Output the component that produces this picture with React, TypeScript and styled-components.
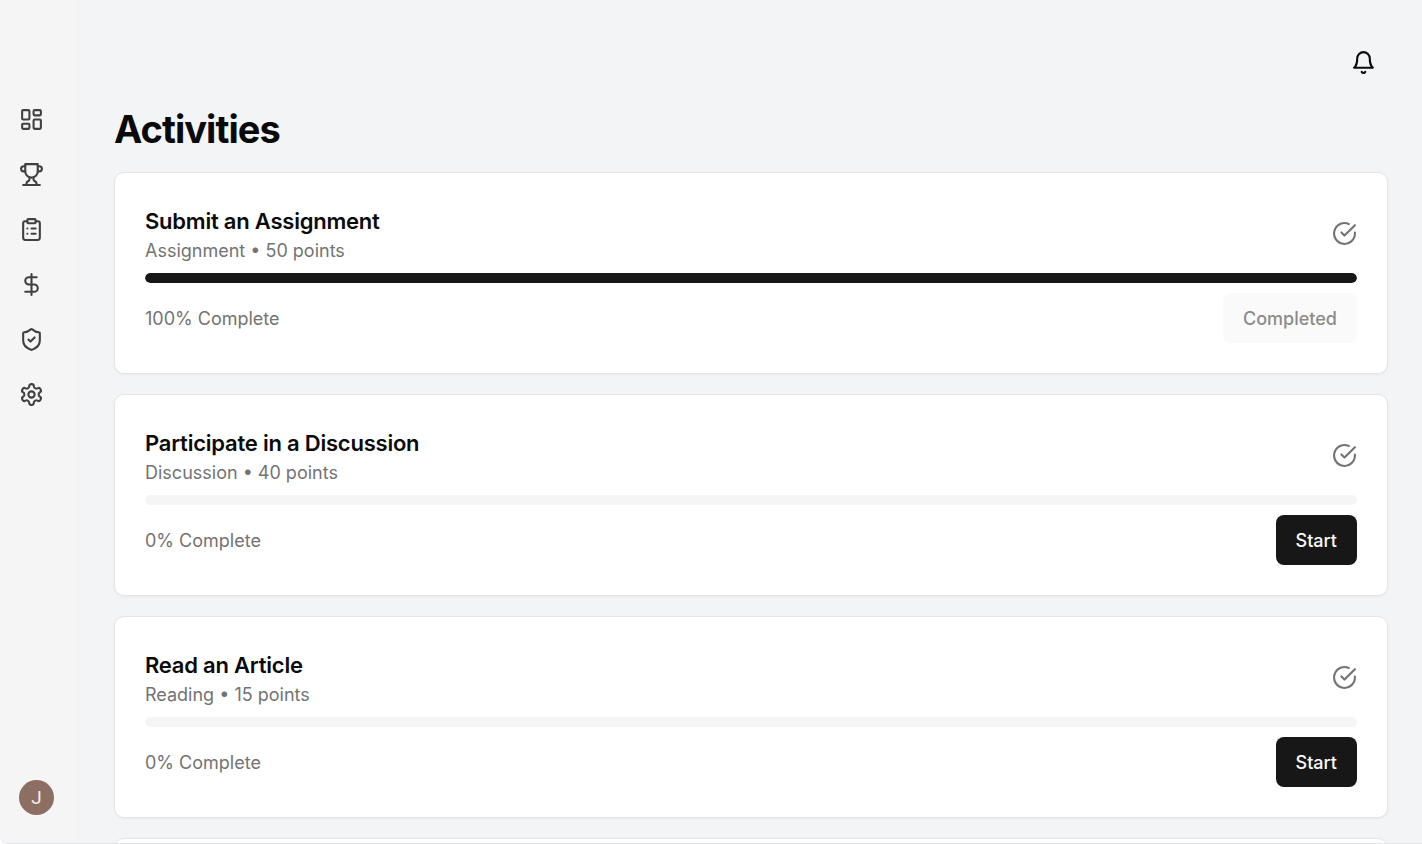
import React from "react";
import styled, { createGlobalStyle } from "styled-components";
import { ClipboardList, DollarSign, LayoutDashboard, ShieldCheck } from "lucide-react";

const GlobalStyle = createGlobalStyle`
  *, *::before, *::after { box-sizing: border-box; }
  body {
    margin: 0;
    background: #fff;
    color: #0a0a0a;
    font-family: Inter, "Liberation Sans", sans-serif;
    font-size: 18px;
    line-height: 25px;
  }
  h1, h2, p, ul { margin: 0; padding: 0; }
`;

const Shell = styled.div`
  display: flex;
  height: 100vh;
  overflow: hidden;
  background: #f3f4f6;
  border-bottom: 1px solid #e2e4e8;
  border-radius: 0 0 0 8px;
`;

const Sidebar = styled.aside`
  display: flex;
  flex-direction: column;
  justify-content: space-between;
  flex: none;
  width: 75px;
  padding: 92px 19px 28px;
  background: #f5f5f5;
`;

const NavList = styled.ul`
  display: flex;
  flex-direction: column;
  list-style: none;
`;

const NavLink = styled.a`
  display: flex;
  align-items: center;
  height: 55px;
  color: #404040;
`;

const Avatar = styled.button`
  width: 35px;
  height: 35px;
  padding: 0;
  border: 0;
  border-radius: 50%;
  background: #8d6e63;
  color: #f5efec;
  font: 400 19px/35px Roboto, sans-serif;
`;

const Main = styled.main`
  flex: 1;
  min-width: 0;
  padding: 37px 34px 20px 39px;
  overflow-y: auto;
  scrollbar-width: none;
`;

const TopBar = styled.header`
  display: flex;
  justify-content: flex-end;
`;

const IconButton = styled.button`
  display: flex;
  align-items: center;
  justify-content: center;
  width: 50px;
  height: 50px;
  padding: 0;
  border: 0;
  background: none;
  color: #0a0a0a;
`;

const PageTitle = styled.h1`
  margin: 20px 0;
  font-size: 38px;
  font-weight: 700;
  line-height: 45px;
  letter-spacing: -0.025em;
`;

const CardList = styled.div`
  display: flex;
  flex-direction: column;
  gap: 20px;
`;

const Card = styled.article`
  display: flex;
  flex-direction: column;
  gap: 10px;
  padding: 30px;
  border: 1px solid #e5e5e5;
  border-radius: 10px;
  background: #fff;
  box-shadow: 0 1px 3px rgba(0, 0, 0, 0.05);
`;

const CardRow = styled.div`
  display: flex;
  align-items: center;
  justify-content: space-between;
  color: #737373;
`;

const CardTitle = styled.h2`
  color: #0a0a0a;
  font-size: 22px;
  font-weight: 600;
  line-height: 36px;
  letter-spacing: -0.01em;
`;

const CardMeta = styled.p`
  line-height: 24px;
`;

const Track = styled.div`
  height: 10px;
  overflow: hidden;
  border-radius: 5px;
  background: #f5f5f5;
`;

const Fill = styled.div`
  height: 100%;
  border-radius: 5px;
  background: #171717;
`;

const ActionButton = styled.button<{ $done: boolean }>`
  height: 50px;
  padding: 0 20px;
  border: 0;
  border-radius: 8px;
  background: ${(p) => (p.$done ? "#fafafa" : "#171717")};
  color: ${(p) => (p.$done ? "#8b8b8b" : "#fafafa")};
  font: 500 18px/25px Inter, sans-serif;
`;

const LineIcon = styled.svg.attrs({ viewBox: "0 0 24 24", "aria-hidden": true })`
  flex: none;
  width: 25px;
  height: 25px;
  fill: none;
  stroke: currentColor;
  stroke-width: 2;
  stroke-linecap: round;
  stroke-linejoin: round;
`;

const TrophyIcon = () => (
  <LineIcon>
    <path d="M6 9H4.5a2.5 2.5 0 0 1 0-5H6" />
    <path d="M18 9h1.5a2.5 2.5 0 0 0 0-5H18" />
    <path d="M4 22h16" />
    <path d="M10 14.66V17c0 .55-.47.98-.97 1.21C7.85 18.75 7 20.24 7 22" />
    <path d="M14 14.66V17c0 .55.47.98.97 1.21C16.15 18.75 17 20.24 17 22" />
    <path d="M18 2H6v7a6 6 0 0 0 12 0V2Z" />
  </LineIcon>
);

const SettingsIcon = () => (
  <LineIcon>
    <path d="M12.22 2h-.44a2 2 0 0 0-2 2v.18a2 2 0 0 1-1 1.73l-.43.25a2 2 0 0 1-2 0l-.15-.08a2 2 0 0 0-2.73.73l-.22.38a2 2 0 0 0 .73 2.73l.15.1a2 2 0 0 1 1 1.72v.51a2 2 0 0 1-1 1.74l-.15.09a2 2 0 0 0-.73 2.73l.22.38a2 2 0 0 0 2.73.73l.15-.08a2 2 0 0 1 2 0l.43.25a2 2 0 0 1 1 1.73V20a2 2 0 0 0 2 2h.44a2 2 0 0 0 2-2v-.18a2 2 0 0 1 1-1.73l.43-.25a2 2 0 0 1 2 0l.15.08a2 2 0 0 0 2.73-.73l.22-.39a2 2 0 0 0-.73-2.73l-.15-.08a2 2 0 0 1-1-1.74v-.5a2 2 0 0 1 1-1.74l.15-.09a2 2 0 0 0 .73-2.73l-.22-.38a2 2 0 0 0-2.73-.73l-.15.08a2 2 0 0 1-2 0l-.43-.25a2 2 0 0 1-1-1.73V4a2 2 0 0 0-2-2z" />
    <circle cx="12" cy="12" r="3" />
  </LineIcon>
);

const BellIcon = () => (
  <LineIcon>
    <path d="M6 8a6 6 0 0 1 12 0c0 7 3 9 3 9H3s3-2 3-9" />
    <path d="M10.3 21a1.94 1.94 0 0 0 3.4 0" />
  </LineIcon>
);

const CheckIcon = () => (
  <LineIcon>
    <path d="M22 11.08V12a10 10 0 1 1-5.93-9.14" />
    <path d="m9 11 3 3L22 4" />
  </LineIcon>
);

const navItems = [
  { label: "Dashboard", icon: <LayoutDashboard size={25} /> },
  { label: "Leaderboard", icon: <TrophyIcon /> },
  { label: "Activities", icon: <ClipboardList size={25} /> },
  { label: "Rewards", icon: <DollarSign size={25} /> },
  { label: "Badges", icon: <ShieldCheck size={25} /> },
  { label: "Settings", icon: <SettingsIcon /> },
];

const activities = [
  { title: "Submit an Assignment", kind: "Assignment", points: 50, progress: 100 },
  { title: "Participate in a Discussion", kind: "Discussion", points: 40, progress: 0 },
  { title: "Read an Article", kind: "Reading", points: 15, progress: 0 },
  { title: "Complete a Quiz", kind: "Quiz", points: 30, progress: 0 },
];

export default function App() {
  return (
    <>
      <GlobalStyle />
      <Shell>
        <Sidebar>
          <nav aria-label="Main">
            <NavList>
              {navItems.map(({ label, icon }) => (
                <li key={label}>
                  <NavLink href="#" aria-label={label}>
                    {icon}
                  </NavLink>
                </li>
              ))}
            </NavList>
          </nav>
          <Avatar aria-label="Account">J</Avatar>
        </Sidebar>
        <Main>
          <TopBar>
            <IconButton aria-label="Notifications">
              <BellIcon />
            </IconButton>
          </TopBar>
          <PageTitle>Activities</PageTitle>
          <CardList>
            {activities.map(({ title, kind, points, progress }) => {
              const done = progress === 100;
              return (
                <Card key={title}>
                  <CardRow>
                    <div>
                      <CardTitle>{title}</CardTitle>
                      <CardMeta>{`${kind} • ${points} points`}</CardMeta>
                    </div>
                    <CheckIcon />
                  </CardRow>
                  <Track role="progressbar" aria-label={title} aria-valuenow={progress}>
                    <Fill style={{ width: `${progress}%` }} />
                  </Track>
                  <CardRow>
                    <span>{`${progress}% Complete`}</span>
                    <ActionButton $done={done} disabled={done}>
                      {done ? "Completed" : "Start"}
                    </ActionButton>
                  </CardRow>
                </Card>
              );
            })}
          </CardList>
        </Main>
      </Shell>
    </>
  );
}
